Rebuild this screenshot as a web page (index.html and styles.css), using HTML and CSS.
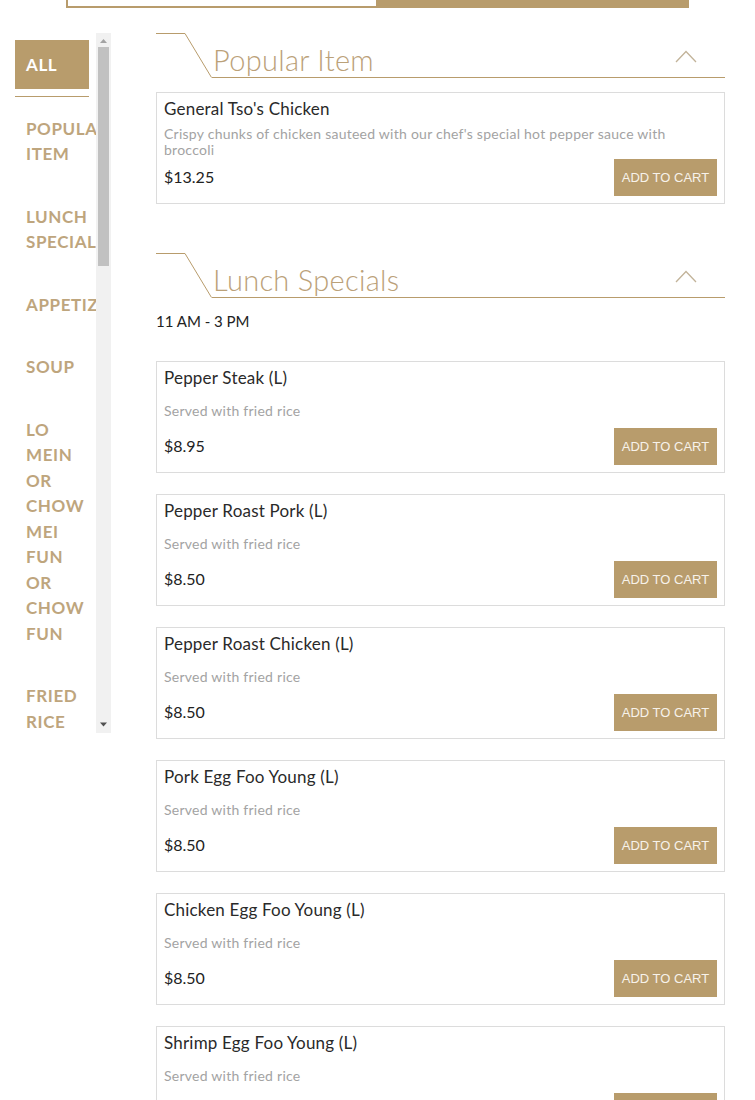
FILE: index.html
```html
<!DOCTYPE html>
<html>
<head>
<meta charset="utf-8">
<link rel="stylesheet" href="styles.css">
</head>
<body>
<div class="topbar"><div class="tb-left"></div><div class="tb-right"></div></div>
<div class="layout">
  <nav class="sidebar">
    <div class="cat-list">
      <div class="cat active"><span class="lbl">ALL</span></div>
      <div class="cat">POPULAR ITEM</div>
      <div class="cat">LUNCH SPECIALS</div>
      <div class="cat">APPETIZERS</div>
      <div class="cat">SOUP</div>
      <div class="cat">LO MEIN OR CHOW MEI FUN OR CHOW FUN</div>
      <div class="cat">FRIED RICE</div>
      <div class="cat">CHOW MEIN</div>
      <div class="cat">CHOP SUEY</div>
      <div class="cat">EGG FOO YOUNG</div>
    </div>
    <div class="vscroll" aria-hidden="true">
      <div class="sb-btn"><svg width="15" height="14" viewBox="0 0 15 14"><polygon points="4,10 11,10 7.5,6" fill="#a3a3a3"/></svg></div>
      <div class="sb-thumb"></div>
      <div class="sb-space"></div>
      <div class="sb-btn"><svg width="15" height="14" viewBox="0 0 15 14"><polygon points="4,3.5 11,3.5 7.5,7.5" fill="#505050"/></svg></div>
    </div>
  </nav>
  <main class="menu">
    <section class="sec">
      <div class="sec-head">
        <svg class="corner" width="56" height="45" viewBox="0 0 56 45"><polyline points="0,0.5 29,0.5 55.5,44.5" fill="none" stroke="#b89c6c" stroke-width="1"/></svg>
        <div class="head-line">
          <h2 class="sec-title">Popular Item</h2>
          <svg class="chev" width="22" height="13" viewBox="0 0 22 13"><polyline points="1,12 11,1.5 21,12" fill="none" stroke="#c2b399" stroke-width="1.3"/></svg>
        </div>
      </div>
      <div class="cards first">
        <div class="card">
          <div class="name">General Tso's Chicken</div>
          <div class="desc"><span>Crispy chunks of chicken sauteed with our chef's special hot pepper sauce with broccoli</span></div>
          <div class="row"><span class="price">$13.25</span><button class="add">ADD TO CART</button></div>
        </div>
      </div>
    </section>
    <section class="sec">
      <div class="sec-head">
        <svg class="corner" width="56" height="45" viewBox="0 0 56 45"><polyline points="0,0.5 29,0.5 55.5,44.5" fill="none" stroke="#b89c6c" stroke-width="1"/></svg>
        <div class="head-line">
          <h2 class="sec-title">Lunch Specials</h2>
          <svg class="chev" width="22" height="13" viewBox="0 0 22 13"><polyline points="1,12 11,1.5 21,12" fill="none" stroke="#c2b399" stroke-width="1.3"/></svg>
        </div>
      </div>
      <div class="note">11 AM - 3 PM</div>
      <div class="cards">
        <div class="card">
          <div class="name">Pepper Steak (L)</div>
          <div class="desc"><span>Served with fried rice</span></div>
          <div class="row"><span class="price">$8.95</span><button class="add">ADD TO CART</button></div>
        </div>
        <div class="card">
          <div class="name">Pepper Roast Pork (L)</div>
          <div class="desc"><span>Served with fried rice</span></div>
          <div class="row"><span class="price">$8.50</span><button class="add">ADD TO CART</button></div>
        </div>
        <div class="card">
          <div class="name">Pepper Roast Chicken (L)</div>
          <div class="desc"><span>Served with fried rice</span></div>
          <div class="row"><span class="price">$8.50</span><button class="add">ADD TO CART</button></div>
        </div>
        <div class="card">
          <div class="name">Pork Egg Foo Young (L)</div>
          <div class="desc"><span>Served with fried rice</span></div>
          <div class="row"><span class="price">$8.50</span><button class="add">ADD TO CART</button></div>
        </div>
        <div class="card">
          <div class="name">Chicken Egg Foo Young (L)</div>
          <div class="desc"><span>Served with fried rice</span></div>
          <div class="row"><span class="price">$8.50</span><button class="add">ADD TO CART</button></div>
        </div>
        <div class="card">
          <div class="name">Shrimp Egg Foo Young (L)</div>
          <div class="desc"><span>Served with fried rice</span></div>
          <div class="row"><span class="price">$8.50</span><button class="add">ADD TO CART</button></div>
        </div>
      </div>
    </section>
  </main>
</div>
</body>
</html>
```
FILE: styles.css
```css
* { box-sizing: border-box; }
html, body { margin: 0; padding: 0; background: #fff; }
body {
  font-family: Lato, "Noto Sans", sans-serif;
  color: #222;
}
.topbar {
  display: flex;
  margin-left: 66px;
  width: 623px;
  height: 8px;
}
.tb-left {
  width: 310px;
  border-left: 2px solid #b89c6c;
  border-bottom: 2px solid #b89c6c;
}
.tb-right {
  flex: 1;
  background: #b89c6c;
}
.layout {
  display: flex;
  align-items: flex-start;
  margin-top: 25px;
}
.sidebar {
  display: flex;
  margin-left: 15px;
  width: 96px;
  height: 700px;
  flex-shrink: 0;
}
.cat-list {
  width: 81px;
  height: 100%;
  overflow: hidden;
  flex-shrink: 0;
}
.vscroll {
  width: 15px;
  height: 100%;
  background: #f1f1f1;
  display: flex;
  flex-direction: column;
}
.sb-btn {
  height: 14px;
  flex-shrink: 0;
}
.sb-btn svg { display: block; }
.sb-thumb {
  height: 219px;
  margin: 0 2px;
  background: #c1c1c1;
  flex-shrink: 0;
}
.sb-space { flex: 1; }
.cat {
  width: 74px;
  padding: 18.5px 0 18.5px 11px;
  font-size: 17px;
  line-height: 25.5px;
  font-weight: 700;
  letter-spacing: 0.6px;
  color: #bea57d;
  word-break: keep-all;
}
.cat.active {
  padding: 7px 0 7px 0;
  border-bottom: 1px solid #b89c6c;
}
.cat.active .lbl {
  display: block;
  height: 49px;
  line-height: 49px;
  padding-left: 11px;
  background: #b89c6c;
  color: #fff;
}
.menu {
  margin-left: 45px;
  width: 569px;
  flex-shrink: 0;
}
.sec + .sec { margin-top: 49px; }
.sec-head {
  display: flex;
  height: 45px;
}
.corner { display: block; flex-shrink: 0; }
.head-line {
  flex: 1;
  display: flex;
  justify-content: space-between;
  align-items: flex-end;
  border-bottom: 1px solid #b89c6c;
}
.sec-title {
  margin: 0 0 0 1px;
  font-size: 29px;
  line-height: 34px;
  font-weight: 300;
  color: #bba179;
  letter-spacing: 0.3px;
}
.chev {
  display: block;
  margin: 0 28px 14px 0;
}
.note {
  margin-top: 13px;
  font-size: 15px;
  line-height: 20px;
  color: #222;
}
.cards {
  margin-top: 30px;
  display: flex;
  flex-direction: column;
  gap: 21px;
}
.cards.first { margin-top: 14px; }
.card {
  border: 1px solid #dcdcdc;
  padding: 6px 7px 7px 7px;
}
.name {
  font-size: 17px;
  line-height: 20px;
  color: #2a2a2a;
  letter-spacing: 0.2px;
}
.desc {
  height: 40px;
  padding-top: 5px;
  display: flex;
  align-items: center;
  font-size: 14px;
  line-height: 16px;
  color: #a3a3a3;
  letter-spacing: 0.25px;
}
.row {
  display: flex;
  justify-content: space-between;
  align-items: center;
}
.price {
  font-size: 16px;
  color: #222;
  margin-bottom: 2px;
}
.add {
  width: 103px;
  height: 37px;
  border: none;
  background: #b89c6c;
  color: #f7f2ea;
  font-family: "Liberation Sans", Arial, sans-serif;
  font-size: 13px;
  padding: 0;
}
```
